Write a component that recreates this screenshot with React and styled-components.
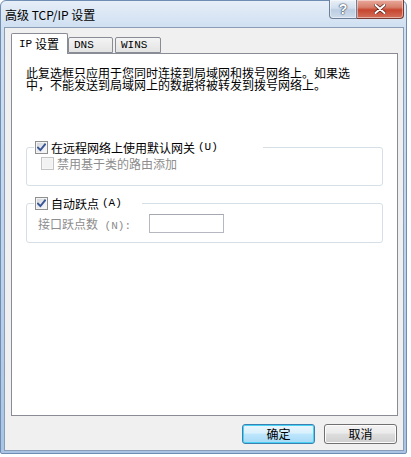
import React from "react";
import styled, { createGlobalStyle } from "styled-components";

const GlobalStyle = createGlobalStyle`
  html, body {
    margin: 0;
    padding: 0;
    background: #ffffff;
  }
  body {
    font-family: "Noto Sans CJK SC", "Liberation Sans", sans-serif;
    font-size: 12px;
    color: #000;
  }
`;

const Window = styled.div`
  width: 407px;
  height: 454px;
  box-sizing: border-box;
  border: 1px solid #6f8db3;
  border-radius: 6px 6px 2px 2px;
  padding: 0 2px 2px 3px;
  display: flex;
  flex-direction: column;
  background: linear-gradient(
    to bottom,
    #e6eef8 0px,
    #d0e0f1 26px,
    #bcd2ec 60%,
    #a9c4e4 100%
  );
`;

const TitleBar = styled.div`
  height: 26px;
  display: flex;
  align-items: flex-start;
  padding-left: 1px;
`;

const Title = styled.span`
  padding-top: 7px;
  line-height: 14px;
  font-size: 12px;
  color: #000;
`;

const CaptionButtons = styled.div`
  margin-left: auto;
  margin-top: -1px;
  display: flex;
`;

const CaptionButton = styled.div`
  width: ${(p) => p.$width}px;
  height: 19px;
  box-sizing: border-box;
  display: flex;
  align-items: center;
  justify-content: center;
  border: 1px solid ${(p) => (p.$close ? "#7a3a30" : "#6d7f98")};
  border-top: none;
  border-left-width: ${(p) => (p.$close ? 0 : 1)}px;
  border-radius: ${(p) => (p.$close ? "0 0 4px 0" : "0 0 0 4px")};
  background: ${(p) =>
    p.$close
      ? "linear-gradient(to bottom, #e9a99c 0%, #d7806d 40%, #c7462f 55%, #d2705b 100%)"
      : "linear-gradient(to bottom, #eaf0f7 0%, #d2dfee 45%, #bccde2 55%, #cfdcea 100%)"};
  box-shadow: inset 0 0 0 1px rgba(255, 255, 255, 0.45);
`;

const HelpGlyph = styled.span`
  font-family: "Liberation Sans", sans-serif;
  font-weight: bold;
  font-size: 14px;
  line-height: 1;
  color: #ffffff;
  text-shadow: 0 0 1px #3b4a60, 0 0 1px #3b4a60, 0 0 2px #3b4a60;
`;

const Client = styled.div`
  height: 424px;
  box-sizing: border-box;
  border: 1px solid #8a9db6;
  background: #f0f0f0;
  padding: 5px 5px 6px 6px;
  display: flex;
  flex-direction: column;
`;

const TabRow = styled.div`
  height: 20px;
  display: flex;
  align-items: flex-end;
`;

const Tab = styled.div`
  position: relative;
  z-index: ${(p) => (p.$active ? 1 : 0)};
  box-sizing: border-box;
  width: ${(p) => p.$width}px;
  height: ${(p) => (p.$active ? 21 : 16)}px;
  margin-bottom: ${(p) => (p.$active ? -1 : 0)}px;
  margin-left: ${(p) => p.$gap || 0}px;
  padding-left: ${(p) => (p.$active ? 7 : 5)}px;
  padding-bottom: ${(p) => (p.$active ? 1 : 0)}px;
  display: flex;
  align-items: center;
  border: 1px solid #898c95;
  border-bottom: ${(p) => (p.$active ? "none" : "1px solid #898c95")};
  border-radius: 2px 2px 0 0;
  background: ${(p) =>
    p.$active ? "#ffffff" : "linear-gradient(to bottom, #f4f4f4, #e3e3e3)"};
  white-space: nowrap;
`;

const Latin = styled.span`
  font-family: "Liberation Mono", "DejaVu Sans Mono", monospace;
  font-size: 11px;
`;

const Panel = styled.div`
  flex: 1;
  box-sizing: border-box;
  border: 1px solid #898c95;
  background: #ffffff;
  padding: 13px 14px;
  display: flex;
  flex-direction: column;
`;

const Note = styled.p`
  margin: 0;
  max-width: 330px;
  line-height: 12px;
  font-size: 12px;
`;

const Group = styled.fieldset`
  margin: ${(p) => p.$top}px 0 0;
  padding: 0;
  min-width: 0;
  border: 1px solid #d5dfe5;
  border-radius: 3px;
`;

const Legend = styled.legend`
  box-sizing: border-box;
  width: ${(p) => p.$width}px;
  height: 13px;
  margin-left: 7px;
  padding: 0 0 0 1px;
`;

const CheckRow = styled.label`
  display: flex;
  align-items: center;
  gap: 3px;
  height: 13px;
  line-height: 13px;
  white-space: nowrap;
  color: ${(p) => (p.$disabled ? "#8d8d8d" : "#000")};
`;

const Box = styled.span`
  width: 13px;
  height: 13px;
  box-sizing: border-box;
  flex: none;
  display: flex;
  align-items: center;
  justify-content: center;
  border: 1px solid ${(p) => (p.$disabled ? "#c4c4c4" : "#8e8f8f")};
  box-shadow: inset 0 0 0 1px ${(p) => (p.$disabled ? "#f6f6f6" : "#f4f4f4")};
  background: ${(p) =>
    p.$disabled
      ? "#f2f2f2"
      : "linear-gradient(135deg, #cdd1d6 0%, #eceef0 60%, #fafafa 100%)"};
`;

const GroupBody = styled.div`
  padding: ${(p) => p.$pad};
  display: flex;
  align-items: center;
`;

const FieldLabel = styled.span`
  width: 111px;
  flex: none;
  color: #8d8d8d;
  white-space: nowrap;
`;

const TextBox = styled.div`
  width: 75px;
  height: 19px;
  box-sizing: border-box;
  border: 1px solid #b5b8c0;
  border-top-color: #a5a8b0;
  background: #ffffff;
`;

const ButtonRow = styled.div`
  margin-top: 8px;
  margin-right: 1px;
  display: flex;
  justify-content: flex-end;
  gap: 9px;
`;

const Button = styled.button`
  width: 73px;
  height: 20px;
  box-sizing: border-box;
  padding: 0;
  font-family: "Noto Sans CJK SC", "Liberation Sans", sans-serif;
  font-size: 12px;
  line-height: 16px;
  color: #000;
  border-radius: 3px;
  border: 1px solid ${(p) => (p.$primary ? "#3c7fb1" : "#707070")};
  box-shadow: inset 0 0 0 1px
    ${(p) => (p.$primary ? "#48d2f4" : "#fcfcfc")};
  background: ${(p) =>
    p.$primary
      ? "linear-gradient(to bottom, #eaf6fd 0%, #d9f0fc 45%, #bee6fd 50%, #a7d9f5 100%)"
      : "linear-gradient(to bottom, #f2f2f2 0%, #ebebeb 45%, #dddddd 50%, #cfcfcf 100%)"};
`;

const Tick = () => (
  <svg width="9" height="9" viewBox="0 0 9 9">
    <path
      d="M1 4.6 L3.4 7 L8 1.4"
      fill="none"
      stroke="#3a5597"
      strokeWidth="1.9"
      strokeLinecap="square"
    />
  </svg>
);

const CloseX = () => (
  <svg width="12" height="10" viewBox="0 0 12 10">
    <path
      d="M1.5 1 L10.5 9 M10.5 1 L1.5 9"
      stroke="#5a2018"
      strokeWidth="3.4"
      strokeLinecap="round"
    />
    <path
      d="M1.5 1 L10.5 9 M10.5 1 L1.5 9"
      stroke="#ffffff"
      strokeWidth="2"
      strokeLinecap="round"
    />
  </svg>
);

const App = () => {
  return (
    <>
      <GlobalStyle />
      <Window>
        <TitleBar>
          <Title>高级 TCP/IP 设置</Title>
          <CaptionButtons>
            <CaptionButton $width={28}>
              <HelpGlyph>?</HelpGlyph>
            </CaptionButton>
            <CaptionButton $width={47} $close>
              <CloseX />
            </CaptionButton>
          </CaptionButtons>
        </TitleBar>

        <Client>
          <TabRow>
            <Tab $active $width={57}>
              <Latin>IP</Latin>&nbsp;设置
            </Tab>
            <Tab $width={45}>
              <Latin>DNS</Latin>
            </Tab>
            <Tab $width={46} $gap={2}>
              <Latin>WINS</Latin>
            </Tab>
          </TabRow>

          <Panel>
            <Note>
              此复选框只应用于您同时连接到局域网和拨号网络上。如果选中，不能发送到局域网上的数据将被转发到拨号网络上。
            </Note>

            <Group $top={50}>
              <Legend $width={229}>
                <CheckRow>
                  <Box>
                    <Tick />
                  </Box>
                  在远程网络上使用默认网关<Latin> (U)</Latin>
                </CheckRow>
              </Legend>
              <GroupBody $pad="3px 0 15px 14px">
                <CheckRow $disabled>
                  <Box $disabled />
                  禁用基于类的路由添加
                </CheckRow>
              </GroupBody>
            </Group>

            <Group $top={11}>
              <Legend $width={108}>
                <CheckRow>
                  <Box>
                    <Tick />
                  </Box>
                  自动跃点<Latin> (A)</Latin>
                </CheckRow>
              </Legend>
              <GroupBody $pad="4px 0 9px 11px">
                <FieldLabel>
                  接口跃点数<Latin> (N):</Latin>
                </FieldLabel>
                <TextBox />
              </GroupBody>
            </Group>
          </Panel>

          <ButtonRow>
            <Button $primary>确定</Button>
            <Button>取消</Button>
          </ButtonRow>
        </Client>
      </Window>
    </>
  );
};

export default App;
